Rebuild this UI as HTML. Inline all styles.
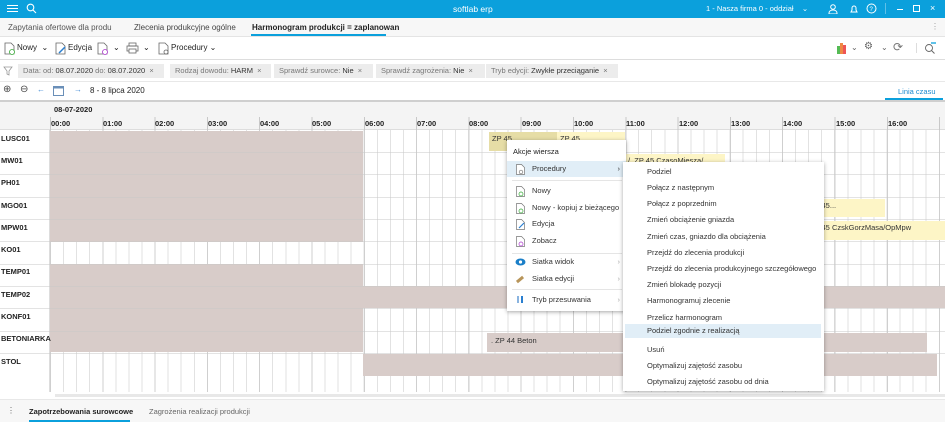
<!DOCTYPE html>
<html><head><meta charset="utf-8"><style>
*{box-sizing:border-box;margin:0;padding:0}
body{width:945px;height:422px;overflow:hidden;font-family:"Liberation Sans",sans-serif;font-size:8px;color:#222;background:#fff;position:relative}
.a{position:absolute}
.top{left:0;top:0;width:945px;height:18px;background:#0ba0dc;color:#fff}
.tabs{top:18px;left:0;width:945px;height:19px;background:#f7f7f7;border-bottom:1px solid #e4e4e4}
.tb{top:37px;left:0;width:945px;height:23px;border-bottom:1px solid #ddd}
.flt{top:60px;left:0;width:945px;height:22px;border-bottom:1px solid #e8e8e8}
.chip{position:absolute;top:4px;height:14px;background:#ececec;color:#777;font-size:7.5px;line-height:14px;padding:0 5px}
.chip b{color:#333;font-weight:normal}
.nav{top:82px;left:0;width:945px;height:20px;border-bottom:2px solid #cfcfcf}
.dh{top:102px;left:0;width:945px;height:28px;background:#f4f4f4;border-bottom:1px solid #ddd}
.grid{left:50px;top:130px;width:895px;height:262px;background-image:repeating-linear-gradient(90deg,#e2e2e2 0 1px,transparent 1px 13.07px)}
.gridh{left:50px;top:130px;width:895px;height:262px;background-image:repeating-linear-gradient(90deg,#cfcfcf 0 1px,transparent 1px 52.3px)}
.row{left:0;width:945px;height:1px;background:rgba(200,200,200,.5)}
.lbl{left:1px;font-weight:bold;font-size:7.5px;color:#222}
.g{background:#d8ccc9}
.y{background:#fdf5c6;font-size:7.5px;padding:2px 3px;color:#333}
.menu{background:#fff;box-shadow:0 1px 4px rgba(0,0,0,.35);font-size:7.5px;color:#333}
.mi{position:absolute;left:0;right:0;height:16px;line-height:16px;padding-left:25px}
.si{position:absolute;left:0;right:0;height:16.2px;line-height:16px;padding-left:24px}
</style></head><body>
<div class="a top">
 <div class="a" style="left:7px;top:5px;width:11px;height:1.3px;background:#fff;box-shadow:0 3px 0 #fff,0 6px 0 #fff"></div>
 <svg class="a" style="left:26px;top:3px" width="11" height="11"><circle cx="4.5" cy="4.5" r="3.3" fill="none" stroke="#fff" stroke-width="1.1"/><path d="M7 7l3 3" stroke="#fff" stroke-width="1.1"/></svg>
 <div class="a" style="left:453px;top:4px;font-size:8.5px">softlab erp</div>
 <div class="a" style="left:706px;top:4px;font-size:7.5px">1 - Nasza firma 0 - oddział &nbsp;&nbsp;&nbsp;⌄</div>
 <svg class="a" style="left:828px;top:4px" width="10" height="10"><circle cx="5" cy="3" r="2.3" fill="none" stroke="#fff"/><path d="M1 10v-1c0-2 2-3 4-3s4 1 4 3v1z" fill="none" stroke="#fff"/></svg>
 <svg class="a" style="left:849px;top:4px" width="10" height="10"><path d="M2 8h6l-1-2V4a2 2 0 0 0-4 0v2z" fill="none" stroke="#fff"/></svg>
 <svg class="a" style="left:866px;top:3px" width="11" height="11"><circle cx="5.5" cy="5.5" r="4.5" fill="none" stroke="#fff"/><text x="3.5" y="8" font-size="6" fill="#fff" font-family="Liberation Sans">?</text></svg>
 <div class="a" style="left:885px;top:3px;width:1px;height:11px;background:#5fc0e8"></div>
 <div class="a" style="left:897px;top:9px;width:6px;height:1px;background:#fff"></div>
 <div class="a" style="left:913px;top:5px;width:7px;height:7px;border:1.3px solid #fff"></div>
 <div class="a" style="left:930px;top:3px;font-size:9px">×</div>
</div>
<div class="a tabs">
 <div class="a" style="left:8px;top:5px;color:#555">Zapytania ofertowe dla produ</div>
 <div class="a" style="left:134px;top:5px;color:#444">Zlecenia produkcyjne ogólne</div>
 <div class="a" style="left:252px;top:5px;font-weight:bold;color:#222">Harmonogram produkcji = zaplanowan</div>
 <div class="a" style="left:251px;top:16px;width:135px;height:2px;background:#0ba0dc"></div>
 <div class="a" style="left:931px;top:4px;color:#999">⋮</div>
</div>
<div class="a tb">
 <svg class="a" style="left:4px;top:5px" width="12" height="13"><path d="M1 1h6l3 3v8H1z" fill="#fff" stroke="#666" stroke-width=".8"/><circle cx="8" cy="10" r="2.5" fill="#fff" stroke="#3a3" stroke-width=".8"/></svg>
 <div class="a" style="left:17px;top:6px">Nowy &nbsp;⌄</div>
 <svg class="a" style="left:55px;top:5px" width="12" height="13"><path d="M1 1h6l3 3v8H1z" fill="#fff" stroke="#666" stroke-width=".8"/><path d="M4 11l6-6" stroke="#2a7fd0" stroke-width="1.5"/></svg>
 <div class="a" style="left:68px;top:6px">Edycja</div>
 <svg class="a" style="left:97px;top:5px" width="12" height="13"><path d="M1 1h6l3 3v8H1z" fill="#fff" stroke="#666" stroke-width=".8"/><circle cx="8" cy="10" r="2.5" fill="#fff" stroke="#a3c" stroke-width=".8"/></svg>
 <div class="a" style="left:113px;top:6px">⌄</div>
 <svg class="a" style="left:126px;top:5px" width="13" height="12"><rect x="3" y="1" width="7" height="3" fill="none" stroke="#666" stroke-width=".8"/><rect x="1" y="4" width="11" height="5" fill="none" stroke="#666" stroke-width=".8"/><rect x="3" y="7" width="7" height="4" fill="#fff" stroke="#666" stroke-width=".8"/></svg>
 <div class="a" style="left:143px;top:6px">⌄</div>
 <svg class="a" style="left:158px;top:5px" width="12" height="13"><path d="M1 1h6l3 3v8H1z" fill="#fff" stroke="#666" stroke-width=".8"/><circle cx="8" cy="10" r="2" fill="none" stroke="#666" stroke-width=".8"/></svg>
 <div class="a" style="left:171px;top:6px">Procedury ⌄</div>
 <svg class="a" style="left:837px;top:5px" width="12" height="12"><rect x="0" y="4" width="3" height="8" fill="#5b5"/><rect x="3" y="1" width="3" height="11" fill="#e84"/><rect x="6" y="3" width="3" height="9" fill="#e55"/></svg>
 <div class="a" style="left:851px;top:6px;color:#666">⌄</div>
 <div class="a" style="left:864px;top:4px;color:#666;font-size:10px">⚙</div>
 <div class="a" style="left:881px;top:6px;color:#666">⌄</div>
 <div class="a" style="left:893px;top:3px;color:#777;font-size:12px">⟳</div>
 <div class="a" style="left:916px;top:6px;width:1px;height:10px;background:#ddd"></div>
 <svg class="a" style="left:924px;top:5px" width="12" height="12"><circle cx="5" cy="6" r="3.5" fill="none" stroke="#666" stroke-width=".9"/><path d="M7.5 8.5l3 3" stroke="#666"/><path d="M7 1h5" stroke="#0ba0dc" stroke-width="1.3"/></svg>
</div>
<div class="a flt">
 <svg class="a" style="left:3px;top:6px" width="10" height="10"><path d="M1 1h8l-3 4v4l-2-1V5z" fill="none" stroke="#999" stroke-width=".8"/></svg>
 <div class="chip" style="left:18px;width:146px">Data: od: <b>08.07.2020</b> do: <b>08.07.2020</b> &nbsp;×</div>
 <div class="chip" style="left:170px;width:101px">Rodzaj dowodu: <b>HARM</b> &nbsp;×</div>
 <div class="chip" style="left:274px;width:99px">Sprawdź surowce: <b>Nie</b> &nbsp;×</div>
 <div class="chip" style="left:376px;width:109px">Sprawdź zagrożenia: <b>Nie</b> &nbsp;×</div>
 <div class="chip" style="left:486px;width:132px">Tryb edycji: <b>Zwykłe przeciąganie</b> &nbsp;×</div>
</div>
<div class="a nav">
 <div class="a" style="left:3px;top:2px;font-size:10px;color:#444">⊕</div>
 <div class="a" style="left:20px;top:2px;font-size:10px;color:#444">⊖</div>
 <div class="a" style="left:37px;top:3px;color:#4a90d9">←</div>
 <svg class="a" style="left:53px;top:3px" width="11" height="11"><rect x=".5" y="1.5" width="10" height="9" fill="#fff" stroke="#6a8fb8"/><rect x=".5" y="1.5" width="10" height="2" fill="#6a8fb8"/></svg>
 <div class="a" style="left:74px;top:3px;color:#4a90d9">→</div>
 <div class="a" style="left:90px;top:4px">8 - 8 lipca 2020</div>
 <div class="a" style="left:898px;top:5px;color:#1a8ad0;font-size:7.5px">Linia czasu</div>
 <div class="a" style="left:885px;top:16px;width:58px;height:2px;background:#0ba0dc"></div>
</div>
<div class="a dh">
 <div class="a" style="left:54px;top:3px;font-weight:bold;font-size:7.5px">08-07-2020</div>
 <div class="a" style="left:50px;top:15px;width:895px;height:13px;background-image:repeating-linear-gradient(90deg,#c8c8c8 0 1px,transparent 1px 52.3px)"></div>
</div>
<div class="a" style="left:0;top:130px;width:50px;height:262px;border-right:1px solid #ddd"></div>
<div class="a grid"></div><div class="a gridh"></div>
<div class="a g" style="left:50px;top:131px;width:313px;height:111px"></div>
<div class="a g" style="left:50px;top:264px;width:313px;height:88px"></div>
<div class="a g" style="left:363px;top:286px;width:582px;height:22px"></div>
<div class="a g" style="left:487px;top:333px;width:440px;height:19px;font-size:7.5px;padding:3px 4px;color:#333">. ZP 44 Beton</div>
<div class="a g" style="left:363px;top:354px;width:574px;height:22px"></div>
<div class="a row" style="top:152px"></div><div class="a row" style="top:174px"></div><div class="a row" style="top:197px"></div><div class="a row" style="top:219px"></div><div class="a row" style="top:241px"></div><div class="a row" style="top:264px"></div><div class="a row" style="top:286px"></div><div class="a row" style="top:308px"></div><div class="a row" style="top:331px"></div><div class="a row" style="top:353px"></div>
<div class="a lbl" style="top:134px">LUSC01</div>
<div class="a lbl" style="top:156px">MW01</div>
<div class="a lbl" style="top:178px">PH01</div>
<div class="a lbl" style="top:201px">MGO01</div>
<div class="a lbl" style="top:223px">MPW01</div>
<div class="a lbl" style="top:245px">KO01</div>
<div class="a lbl" style="top:267px">TEMP01</div>
<div class="a lbl" style="top:290px">TEMP02</div>
<div class="a lbl" style="top:312px">KONF01</div>
<div class="a lbl" style="top:334px">BETONIARKA</div>
<div class="a lbl" style="top:357px">STOL</div>
<div class="a y" style="left:489px;top:132px;width:68px;height:19px;background:#e6dda6">ZP 45</div>
<div class="a y" style="left:557px;top:132px;width:68px;height:19px">ZP 45</div>
<div class="a y" style="left:625px;top:154px;width:100px;height:18px">/ &nbsp;ZP 45 CzasoMiesza/</div>
<div class="a y" style="left:815px;top:199px;width:70px;height:18px">' 45...</div>
<div class="a y" style="left:815px;top:221px;width:130px;height:19px">' 45 CzskGorzMasa/OpMpw</div>
<div class="a" style="left:55px;top:394px;width:890px;height:3px;background:#e8e8e8"></div>
<div class="a" style="left:0;top:399px;width:945px;height:23px;background:#f7f7f7;border-top:1px solid #e8e8e8">
 <div class="a" style="left:7px;top:6px;color:#666">⋮</div>
 <div class="a" style="left:29px;top:7px;font-weight:bold;font-size:7.5px">Zapotrzebowania surowcowe</div>
 <div class="a" style="left:29px;top:20px;width:101px;height:2px;background:#0ba0dc"></div>
 <div class="a" style="left:149px;top:7px;color:#666;font-size:7.5px">Zagrożenia realizacji produkcji</div>
</div>
<div class="a menu" style="left:507px;top:140px;width:119px;height:171px">
 <div class="mi" style="top:4px;padding-left:6px;color:#222">Akcje wiersza</div>
 <div class="mi" style="top:21px;background:#e1eef7">Procedury<span style="position:absolute;right:6px">›</span></div>
 <div class="a" style="left:5px;top:40px;width:110px;height:1px;background:#e5e5e5"></div>
 <div class="mi" style="top:43px">Nowy</div>
 <div class="mi" style="top:60px;white-space:nowrap;overflow:hidden">Nowy - kopiuj z bieżącego</div>
 <div class="mi" style="top:76px">Edycja</div>
 <div class="mi" style="top:93px">Zobacz</div>
 <div class="a" style="left:5px;top:113px;width:110px;height:1px;background:#e5e5e5"></div>
 <div class="mi" style="top:114px">Siatka widok<span style="position:absolute;right:6px;color:#aaa">›</span></div>
 <div class="mi" style="top:131px">Siatka edycji<span style="position:absolute;right:6px;color:#aaa">›</span></div>
 <div class="a" style="left:5px;top:149px;width:110px;height:1px;background:#e5e5e5"></div>
 <div class="mi" style="top:152px">Tryb przesuwania<span style="position:absolute;right:6px;color:#aaa">›</span></div>
 <svg class="a" style="left:9px;top:24px" width="9" height="11"><path d="M.5.5h5l3 3v7h-8z" fill="#fff" stroke="#777" stroke-width=".7"/><circle cx="5" cy="8" r="1.8" fill="none" stroke="#777" stroke-width=".7"/></svg>
 <svg class="a" style="left:9px;top:46px" width="9" height="11"><path d="M.5.5h5l3 3v7h-8z" fill="#fff" stroke="#777" stroke-width=".7"/><circle cx="5" cy="8" r="2" fill="#fff" stroke="#3a3" stroke-width=".7"/></svg>
 <svg class="a" style="left:9px;top:63px" width="9" height="11"><path d="M.5.5h5l3 3v7h-8z" fill="#fff" stroke="#777" stroke-width=".7"/><circle cx="5" cy="8" r="2" fill="#fff" stroke="#3a3" stroke-width=".7"/></svg>
 <svg class="a" style="left:9px;top:79px" width="9" height="11"><path d="M.5.5h5l3 3v7h-8z" fill="#fff" stroke="#777" stroke-width=".7"/><path d="M3 9l5-5" stroke="#2a7fd0" stroke-width="1.2"/></svg>
 <svg class="a" style="left:9px;top:96px" width="9" height="11"><path d="M.5.5h5l3 3v7h-8z" fill="#fff" stroke="#777" stroke-width=".7"/><circle cx="5" cy="8" r="2" fill="#fff" stroke="#a3c" stroke-width=".7"/></svg>
 <svg class="a" style="left:8px;top:118px" width="11" height="8"><ellipse cx="5.5" cy="4" rx="5" ry="3.5" fill="#1a7fc8"/><circle cx="5.5" cy="4" r="1.6" fill="#fff"/></svg>
 <div class="a" style="left:9px;top:138px;width:8px;height:3px;background:#b8955a;transform:rotate(-40deg)"></div>
 <div class="a" style="left:10px;top:156px;width:2px;height:7px;background:#8ab4e0"></div><div class="a" style="left:14px;top:156px;width:2px;height:7px;background:#2a7fd0"></div>
</div>
<div class="a menu" style="left:623px;top:162px;width:201px;height:229px">
 <div class="si" style="top:2px">Podziel</div>
 <div class="si" style="top:18px">Połącz z następnym</div>
 <div class="si" style="top:34px">Połącz z poprzednim</div>
 <div class="si" style="top:50px">Zmień obciążenie gniazda</div>
 <div class="si" style="top:67px">Zmień czas, gniazdo dla obciążenia</div>
 <div class="si" style="top:83px">Przejdź do zlecenia produkcji</div>
 <div class="si" style="top:99px">Przejdź do zlecenia produkcyjnego szczegółowego</div>
 <div class="si" style="top:115px">Zmień blokadę pozycji</div>
 <div class="si" style="top:131px">Harmonogramuj zlecenie</div>
 <div class="si" style="top:148px">Przelicz harmonogram</div>
 <div class="si" style="top:162px;left:2px;right:3px;height:14px;line-height:14px;padding-left:22px;background:#e1eef7">Podziel zgodnie z realizacją</div>
 <div class="si" style="top:180px">Usuń</div>
 <div class="si" style="top:196px">Optymalizuj zajętość zasobu</div>
 <div class="si" style="top:212px">Optymalizuj zajętość zasobu od dnia</div>
</div>
<div class="a" style="top:119px;left:0;width:945px;height:10px;font-weight:bold;font-size:7.5px">
<span class="a" style="left:51px">00:00</span><span class="a" style="left:103px">01:00</span><span class="a" style="left:155px">02:00</span><span class="a" style="left:208px">03:00</span><span class="a" style="left:260px">04:00</span><span class="a" style="left:312px">05:00</span><span class="a" style="left:365px">06:00</span><span class="a" style="left:417px">07:00</span><span class="a" style="left:469px">08:00</span><span class="a" style="left:522px">09:00</span><span class="a" style="left:574px">10:00</span><span class="a" style="left:626px">11:00</span><span class="a" style="left:679px">12:00</span><span class="a" style="left:731px">13:00</span><span class="a" style="left:783px">14:00</span><span class="a" style="left:836px">15:00</span><span class="a" style="left:888px">16:00</span>
</div>
</body></html>
